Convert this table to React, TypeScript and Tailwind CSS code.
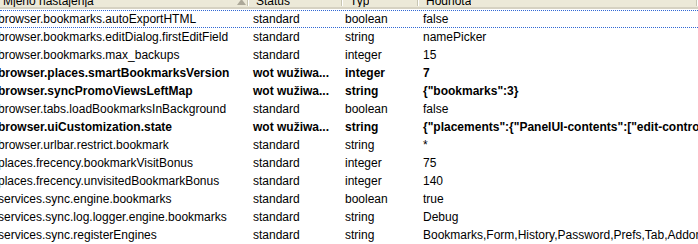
const rows: { name: string; status: string; type: string; value: string; bold?: boolean }[] = [
  { name: "browser.bookmarks.autoExportHTML", status: "standard", type: "boolean", value: "false" },
  { name: "browser.bookmarks.editDialog.firstEditField", status: "standard", type: "string", value: "namePicker" },
  { name: "browser.bookmarks.max_backups", status: "standard", type: "integer", value: "15" },
  { name: "browser.places.smartBookmarksVersion", status: "wot wužiwa...", type: "integer", value: "7", bold: true },
  { name: "browser.syncPromoViewsLeftMap", status: "wot wužiwa...", type: "string", value: '{"bookmarks":3}', bold: true },
  { name: "browser.tabs.loadBookmarksInBackground", status: "standard", type: "boolean", value: "false" },
  {
    name: "browser.uiCustomization.state",
    status: "wot wužiwa...",
    type: "string",
    value: '{"placements":{"PanelUI-contents":["edit-controls","zoom-controls"]}}',
    bold: true,
  },
  { name: "browser.urlbar.restrict.bookmark", status: "standard", type: "string", value: "*" },
  { name: "places.frecency.bookmarkVisitBonus", status: "standard", type: "integer", value: "75" },
  { name: "places.frecency.unvisitedBookmarkBonus", status: "standard", type: "integer", value: "140" },
  { name: "services.sync.engine.bookmarks", status: "standard", type: "boolean", value: "true" },
  { name: "services.sync.log.logger.engine.bookmarks", status: "standard", type: "string", value: "Debug" },
  {
    name: "services.sync.registerEngines",
    status: "standard",
    type: "string",
    value: "Bookmarks,Form,History,Password,Prefs,Tab,Addons",
  },
];

const cols = "grid grid-cols-[249px_94px_76px_1fr]";

function HeaderCell({ label, arrow, first }: { label: string; arrow?: boolean; first?: boolean }) {
  return (
    <div className={`relative flex items-end h-full ${first ? "pl-[3px]" : "pl-[7px]"} whitespace-nowrap`}>
      <span className="overflow-hidden">{label}</span>
      {arrow && (
        <svg className="absolute right-[3px] top-[10px]" width="9" height="8" viewBox="0 0 9 8">
          <path d="M4.5 0 L9 6 L0 6 Z" fill="#ACA899" />
        </svg>
      )}
      <div className="absolute right-0 top-[4px] bottom-[1px] w-[2px] border-l border-[#C7C5B2] border-r border-r-white" />
    </div>
  );
}

export default function App() {
  return (
    <div
      className="w-[698px] h-[244px] overflow-hidden bg-white text-black text-[12px] leading-none"
      style={{ fontFamily: '"Liberation Sans", Arial, sans-serif' }}
    >
      <div className={`${cols} h-[20px] -mt-[11px] bg-[#ECE9D8] border-b-[2px] border-[#D6D2C2]`}>
        <HeaderCell label="Mjeno nastajenja" arrow first />
        <HeaderCell label="Status" />
        <HeaderCell label="Typ" />
        <HeaderCell label="Hodnota" />
      </div>
      <div className="pt-[1px]">
        {rows.map((r, i) => (
          <div
            key={r.name}
            className={`${cols} h-[18px] items-center whitespace-nowrap leading-[15px] ${r.bold ? "font-bold" : ""} ${
              i === 0 ? "border-y border-dotted border-[#3168D5]" : ""
            }`}
          >
            <div className="overflow-hidden -ml-[2px]">{r.name}</div>
            <div className="overflow-hidden pl-[4px]">{r.status}</div>
            <div className="overflow-hidden pl-[2px]">{r.type}</div>
            <div className="overflow-hidden pl-[4px]">{r.value}</div>
          </div>
        ))}
      </div>
    </div>
  );
}
